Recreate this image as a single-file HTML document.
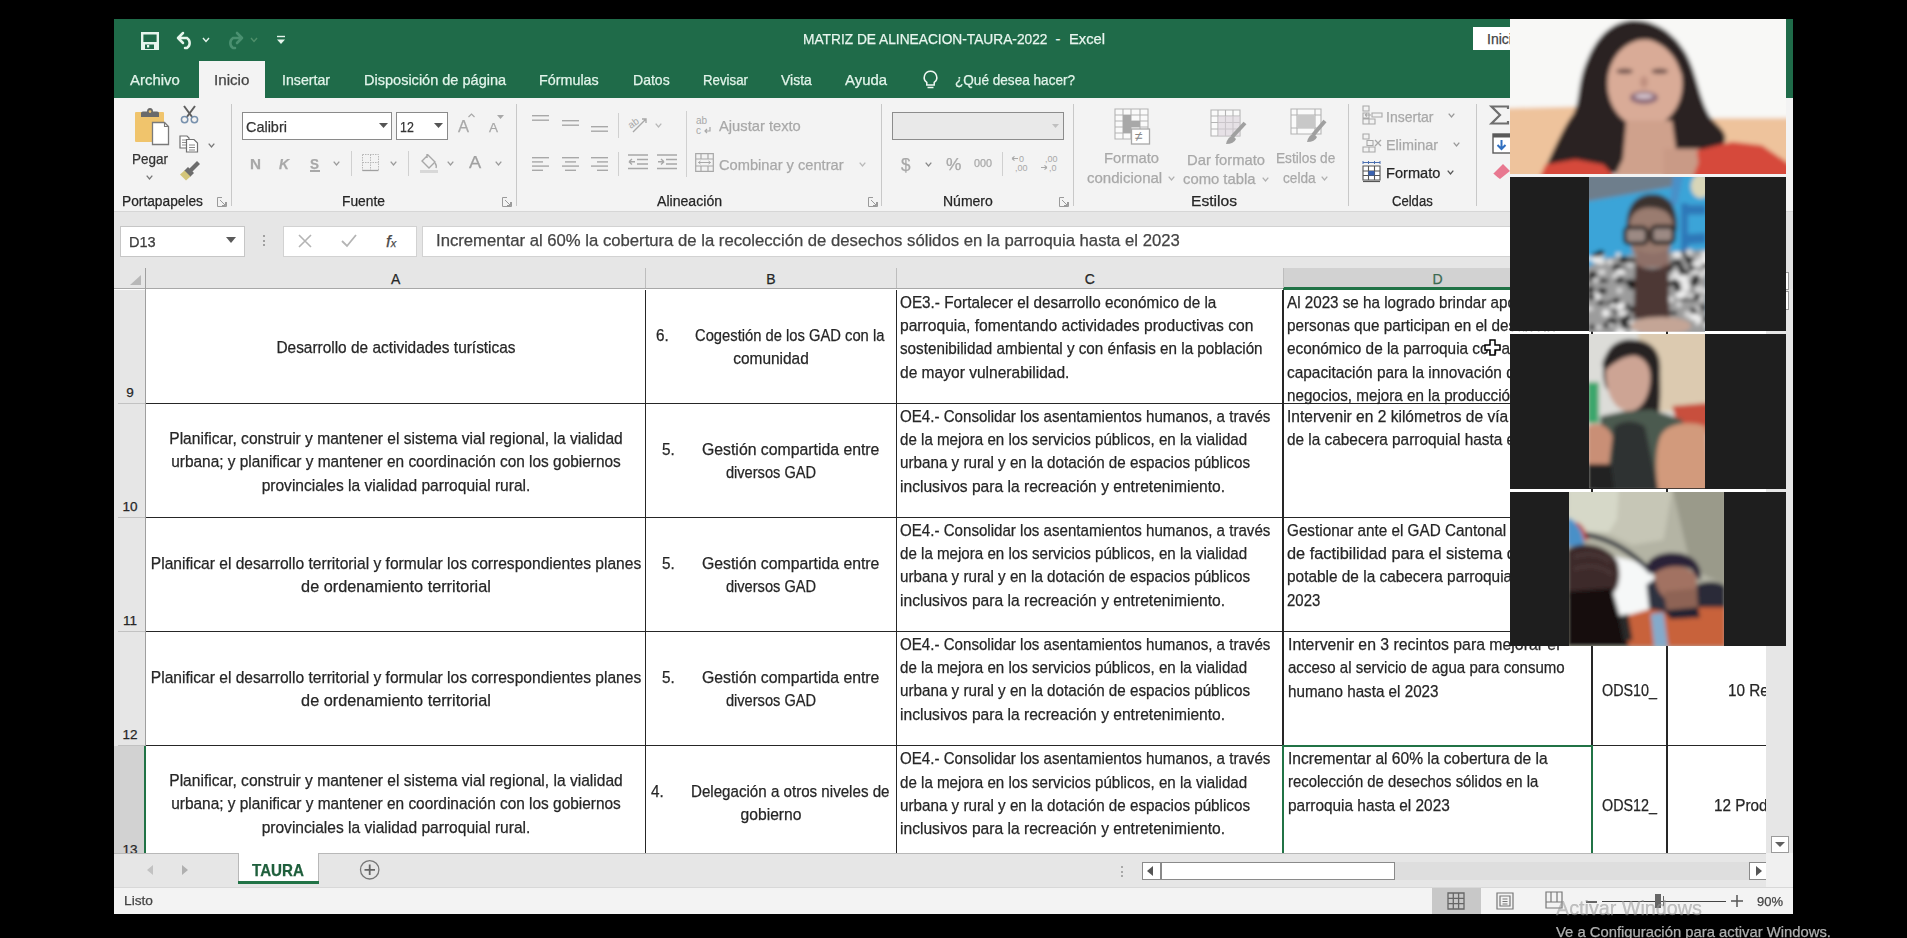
<!DOCTYPE html><html><head><meta charset="utf-8"><style>
html,body{margin:0;padding:0;}
body{width:1907px;height:938px;background:#000;position:relative;overflow:hidden;font-family:"Liberation Sans",sans-serif;}
.t{position:absolute;white-space:nowrap;-webkit-text-stroke:0.25px currentColor;}
.b{position:absolute;box-sizing:border-box;}
svg{position:absolute;overflow:visible;}
</style></head><body>
<div class="b" style="left:114.00px;top:19.00px;width:1679.00px;height:79.00px;background:#1f6b49;"></div>
<div class="b" style="left:114.00px;top:98.00px;width:1679.00px;height:114.00px;background:#f3f3f3;border-bottom:1px solid #d6d6d6;"></div>
<div class="b" style="left:199.00px;top:61.00px;width:66.00px;height:37.00px;background:#f3f3f3;"></div>
<div class="b" style="left:114.00px;top:212.00px;width:1679.00px;height:77.00px;background:#e6e6e6;"></div>
<div class="b" style="left:114.00px;top:289.00px;width:1679.00px;height:564.00px;background:#ffffff;"></div>
<div class="b" style="left:114.00px;top:853.00px;width:1679.00px;height:34.00px;background:#e6e6e6;border-top:1px solid #c8c8c8;border-bottom:1px solid #d4d4d4;"></div>
<div class="b" style="left:114.00px;top:887.00px;width:1679.00px;height:27.00px;background:#f3f3f3;"></div>
<svg style="left:141px;top:32px" width="18" height="18"><path d="M1.2 1.2 H16.8 V16.8 H1.2 Z" fill="none" stroke="#e6f5ec" stroke-width="2.4"/><rect x="1" y="10" width="16" height="7" fill="#e6f5ec"/><rect x="4" y="12.5" width="9" height="4.5" fill="#1f6b49"/><rect x="6" y="13" width="2.2" height="2.5" fill="#e6f5ec"/></svg>
<svg style="left:176px;top:31px" width="20" height="18"><path d="M2 7 L7 2 M2 7 L7 12 M2 7 H11 A6 6 0 0 1 11 17 H9" fill="none" stroke="#e6f5ec" stroke-width="2.5" stroke-linecap="round"/></svg>
<svg style="left:202px;top:37px" width="8" height="6"><path d="M1 1 L4 4.5 L7 1" fill="none" stroke="#e6f5ec" stroke-width="1.4"/></svg>
<svg style="left:224px;top:31px" width="20" height="18"><path d="M18 7 L13 2 M18 7 L13 12 M18 7 H9 A6 6 0 0 0 9 17 H11" fill="none" stroke="#4a9070" stroke-width="2.6" stroke-linecap="round"/></svg>
<svg style="left:250px;top:37px" width="8" height="6"><path d="M1 1 L4 4.5 L7 1" fill="none" stroke="#4f8f6a" stroke-width="1.4"/></svg>
<svg style="left:276px;top:35px" width="10" height="10"><path d="M1 1.5 H9" stroke="#e6f5ec" stroke-width="1.4"/><path d="M1 4.5 L9 4.5 L5 9Z" fill="#e6f5ec"/></svg>
<div class="t" style="top:31.53px;font-size:14.50px;line-height:14.50px;color:#e8f5ee;left:803.10px;transform:scaleX(0.9473);transform-origin:0 0;">MATRIZ DE ALINEACION-TAURA-2022</div>
<div class="t" style="top:31.53px;font-size:14.50px;line-height:14.50px;color:#e8f5ee;left:1055.50px;">-</div>
<div class="t" style="top:31.53px;font-size:14.50px;line-height:14.50px;color:#e8f5ee;left:1069.40px;transform:scaleX(1.0153);transform-origin:0 0;">Excel</div>
<div class="b" style="left:1473.00px;top:27.00px;width:57.00px;height:23.00px;background:#fff;"></div>
<div class="t" style="top:31.65px;font-size:14.00px;line-height:14.00px;color:#444;left:1487.00px;">Inicio</div>
<div class="t" style="top:73.13px;font-size:14.50px;line-height:14.50px;color:#e2f4ea;left:130.30px;transform:scaleX(1.0300);transform-origin:0 0;">Archivo</div>
<div class="t" style="top:73.13px;font-size:14.50px;line-height:14.50px;color:#e2f4ea;left:282.30px;transform:scaleX(0.9764);transform-origin:0 0;">Insertar</div>
<div class="t" style="top:73.13px;font-size:14.50px;line-height:14.50px;color:#e2f4ea;left:363.90px;transform:scaleX(1.0016);transform-origin:0 0;">Disposición de página</div>
<div class="t" style="top:73.13px;font-size:14.50px;line-height:14.50px;color:#e2f4ea;left:539.30px;transform:scaleX(0.9879);transform-origin:0 0;">Fórmulas</div>
<div class="t" style="top:73.13px;font-size:14.50px;line-height:14.50px;color:#e2f4ea;left:632.80px;transform:scaleX(0.9689);transform-origin:0 0;">Datos</div>
<div class="t" style="top:73.13px;font-size:14.50px;line-height:14.50px;color:#e2f4ea;left:703.00px;transform:scaleX(0.9155);transform-origin:0 0;">Revisar</div>
<div class="t" style="top:73.13px;font-size:14.50px;line-height:14.50px;color:#e2f4ea;left:781.00px;transform:scaleX(0.9633);transform-origin:0 0;">Vista</div>
<div class="t" style="top:73.13px;font-size:14.50px;line-height:14.50px;color:#e2f4ea;left:845.00px;transform:scaleX(1.0281);transform-origin:0 0;">Ayuda</div>
<div class="t" style="top:73.13px;font-size:14.50px;line-height:14.50px;color:#e2f4ea;left:954.50px;transform:scaleX(0.9371);transform-origin:0 0;">¿Qué desea hacer?</div>
<div class="t" style="top:73.13px;font-size:14.50px;line-height:14.50px;color:#444;left:213.60px;transform:scaleX(1.0458);transform-origin:0 0;">Inicio</div>
<svg style="left:922px;top:70px" width="17" height="20"><path d="M8.5 1.2 A6.2 6.2 0 0 1 12.2 12.4 V15 H4.8 V12.4 A6.2 6.2 0 0 1 8.5 1.2Z" fill="none" stroke="#f0f7f2" stroke-width="1.5"/><path d="M5.5 17.5 H11.5" stroke="#f0f7f2" stroke-width="1.5"/></svg>
<div class="t" style="top:194.35px;font-size:14.00px;line-height:14.00px;color:#262626;left:122.00px;transform:scaleX(0.9817);transform-origin:0 0;">Portapapeles</div>
<div class="t" style="top:194.35px;font-size:14.00px;line-height:14.00px;color:#262626;left:341.80px;transform:scaleX(0.9865);transform-origin:0 0;">Fuente</div>
<div class="t" style="top:194.35px;font-size:14.00px;line-height:14.00px;color:#262626;left:656.50px;transform:scaleX(1.0077);transform-origin:0 0;">Alineación</div>
<div class="t" style="top:194.35px;font-size:14.00px;line-height:14.00px;color:#262626;left:942.60px;transform:scaleX(1.0001);transform-origin:0 0;">Número</div>
<div class="t" style="top:194.35px;font-size:14.00px;line-height:14.00px;color:#262626;left:1191.20px;transform:scaleX(1.1155);transform-origin:0 0;">Estilos</div>
<div class="t" style="top:194.35px;font-size:14.00px;line-height:14.00px;color:#262626;left:1391.50px;transform:scaleX(0.9339);transform-origin:0 0;">Celdas</div>
<svg style="left:217.0px;top:197.0px" width="10" height="10"><path d="M0.5 0.5 H5 M0.5 0.5 V9.5 H9.5 V5 M3 3 L8.5 8.5 M5 8.5 H8.5 V5" fill="none" stroke="#9a9a9a" stroke-width="1"/></svg>
<svg style="left:502.0px;top:197.0px" width="10" height="10"><path d="M0.5 0.5 H5 M0.5 0.5 V9.5 H9.5 V5 M3 3 L8.5 8.5 M5 8.5 H8.5 V5" fill="none" stroke="#9a9a9a" stroke-width="1"/></svg>
<svg style="left:867.5px;top:197.0px" width="10" height="10"><path d="M0.5 0.5 H5 M0.5 0.5 V9.5 H9.5 V5 M3 3 L8.5 8.5 M5 8.5 H8.5 V5" fill="none" stroke="#9a9a9a" stroke-width="1"/></svg>
<svg style="left:1059.0px;top:197.0px" width="10" height="10"><path d="M0.5 0.5 H5 M0.5 0.5 V9.5 H9.5 V5 M3 3 L8.5 8.5 M5 8.5 H8.5 V5" fill="none" stroke="#9a9a9a" stroke-width="1"/></svg>
<div class="b" style="left:231.00px;top:103.50px;width:1.00px;height:102.50px;background:#c8c8c8;"></div>
<div class="b" style="left:516.00px;top:103.50px;width:1.00px;height:102.50px;background:#c8c8c8;"></div>
<div class="b" style="left:881.00px;top:103.50px;width:1.00px;height:102.50px;background:#c8c8c8;"></div>
<div class="b" style="left:1072.50px;top:103.50px;width:1.00px;height:102.50px;background:#c8c8c8;"></div>
<div class="b" style="left:1348.10px;top:103.50px;width:1.00px;height:102.50px;background:#c8c8c8;"></div>
<div class="b" style="left:1475.50px;top:103.50px;width:1.00px;height:102.50px;background:#c8c8c8;"></div>
<svg style="left:134px;top:107px" width="36" height="40"><rect x="1" y="5" width="29" height="30" rx="1" fill="#f0c46c"/><path d="M7 10 V6 Q7 4.5 9 4.5 H13 Q13 1 16 1 Q19 1 19 4.5 H23 Q25 4.5 25 6 V10Z" fill="#6a6a6a"/><circle cx="16" cy="4.6" r="1.3" fill="#f0c46c"/><path d="M18.5 15.5 H30.5 L34.5 19.5 V37.5 H18.5Z" fill="#fff" stroke="#7a7a7a" stroke-width="1.3"/><path d="M30.5 15.5 V19.5 H34.5" fill="none" stroke="#7a7a7a" stroke-width="1.1"/></svg>
<div class="t" style="top:150.60px;font-size:15.00px;line-height:15.00px;color:#333;left:132.00px;transform:scaleX(0.8994);transform-origin:0 0;">Pegar</div>
<svg style="left:146.4px;top:175.0px" width="7" height="5"><path d="M0.7 0.7 L3.5 4 L6.3 0.7" fill="none" stroke="#777" stroke-width="1.3"/></svg>
<svg style="left:180px;top:105px" width="19" height="19"><path d="M4 1 L12.5 12.5 M15 1 L6.5 12.5" stroke="#5e5e5e" stroke-width="2"/><circle cx="4.6" cy="14.6" r="3.2" fill="none" stroke="#7891ad" stroke-width="1.5"/><circle cx="14.4" cy="14.6" r="3.2" fill="none" stroke="#7891ad" stroke-width="1.5"/></svg>
<svg style="left:179px;top:135px" width="20" height="18"><path d="M1 1 H8 L10 3 V13 H1Z" fill="#fff" stroke="#707070" stroke-width="1.2"/><path d="M3 5 H7 M3 7.5 H7 M3 10 H7" stroke="#888" stroke-width="0.9"/><path d="M7.5 4.5 H15 L18.5 8 V17 H7.5Z" fill="#fff" stroke="#707070" stroke-width="1.2"/><path d="M10 10 H16 M10 12.5 H16 M10 15 H16" stroke="#888" stroke-width="1"/></svg>
<svg style="left:208.0px;top:143.0px" width="7" height="5"><path d="M0.7 0.7 L3.5 4 L6.3 0.7" fill="none" stroke="#777" stroke-width="1.3"/></svg>
<svg style="left:179px;top:162px" width="21" height="19"><path d="M13 7 L18 2" stroke="#6d6d6d" stroke-width="4.2" stroke-linecap="square"/><path d="M9 5 L15 11 L11 15 L5 9Z" fill="#6d6d6d"/><path d="M5.5 8.5 L11.5 14.5 L7 18.5 L1 12.5Z" fill="#d4c67a"/></svg>
<div class="b" style="left:242.00px;top:112.00px;width:150.00px;height:28.00px;background:#fff;border:1px solid #8a8a8a;"></div>
<div class="t" style="top:118.50px;font-size:15.00px;line-height:15.00px;color:#333;left:246.00px;transform:scaleX(0.9621);transform-origin:0 0;">Calibri</div>
<svg style="left:379px;top:123px" width="9" height="5"><path d="M0 0 H9 L4.5 5Z" fill="#555"/></svg>
<div class="b" style="left:395.50px;top:112.00px;width:52.10px;height:28.00px;background:#fff;border:1px solid #8a8a8a;"></div>
<div class="t" style="top:118.50px;font-size:15.00px;line-height:15.00px;color:#333;left:400.00px;transform:scaleX(0.8271);transform-origin:0 0;">12</div>
<svg style="left:434px;top:123px" width="9" height="5"><path d="M0 0 H9 L4.5 5Z" fill="#555"/></svg>
<div class="t" style="top:117.91px;font-size:17.00px;line-height:17.00px;color:#a8a8a8;left:457.80px;transform:scaleX(0.9701);transform-origin:0 0;">A</div>
<svg style="left:468px;top:113px" width="7" height="5"><path d="M0.5 4 L3.5 1 L6.5 4" fill="none" stroke="#a8a8a8" stroke-width="1.2"/></svg>
<div class="t" style="top:121.30px;font-size:13.00px;line-height:13.00px;color:#a8a8a8;left:488.70px;transform:scaleX(1.0379);transform-origin:0 0;">A</div>
<svg style="left:497px;top:115px" width="7" height="5"><path d="M0 0 H7 L3.5 4Z" fill="#a8a8a8"/></svg>
<div class="t" style="top:155.80px;font-size:15.00px;line-height:15.00px;color:#a8a8a8;font-weight:bold;left:249.80px;transform:scaleX(1.0154);transform-origin:0 0;">N</div>
<div class="t" style="top:155.80px;font-size:15.00px;line-height:15.00px;color:#a8a8a8;font-weight:bold;left:279.00px;transform:scaleX(0.9231);transform-origin:0 0;"><i>K</i></div>
<div class="t" style="top:155.80px;font-size:15.00px;line-height:15.00px;color:#a8a8a8;font-weight:bold;left:309.90px;transform:scaleX(0.8995);transform-origin:0 0;">S</div>
<div class="b" style="left:309.50px;top:170.00px;width:10.00px;height:1.50px;background:#a8a8a8;"></div>
<svg style="left:333.0px;top:161.0px" width="7" height="5"><path d="M0.7 0.7 L3.5 4 L6.3 0.7" fill="none" stroke="#9a9a9a" stroke-width="1.3"/></svg>
<div class="b" style="left:351.30px;top:151.40px;width:1.00px;height:24.60px;background:#d0d0d0;"></div>
<svg style="left:362px;top:154px" width="17" height="17"><path d="M0.5 0.5 H16.5 V16.5 H0.5Z M8.5 0.5 V16.5 M0.5 8.5 H16.5" fill="none" stroke="#b8b8b8" stroke-width="1" stroke-dasharray="1.5 1"/><path d="M0.5 16.5 H16.5" stroke="#a0a0a0" stroke-width="1.3"/></svg>
<svg style="left:389.5px;top:161.0px" width="7" height="5"><path d="M0.7 0.7 L3.5 4 L6.3 0.7" fill="none" stroke="#9a9a9a" stroke-width="1.3"/></svg>
<div class="b" style="left:407.90px;top:151.40px;width:1.00px;height:24.60px;background:#d0d0d0;"></div>
<svg style="left:419px;top:153px" width="20" height="20"><path d="M8 1 V5 M3 8 L9 2 L16 9 L10 15Z" fill="none" stroke="#a8a8a8" stroke-width="1.4"/><path d="M16 10 Q18 13 17 15" stroke="#a8a8a8" stroke-width="1.4" fill="none"/><rect x="1" y="17" width="18" height="3" fill="#d8d8d8"/></svg>
<svg style="left:446.5px;top:161.0px" width="7" height="5"><path d="M0.7 0.7 L3.5 4 L6.3 0.7" fill="none" stroke="#9a9a9a" stroke-width="1.3"/></svg>
<div class="t" style="top:155.46px;font-size:16.00px;line-height:16.00px;color:#a0a0a0;left:469.10px;transform:scaleX(1.1431);transform-origin:0 0;">A</div>
<svg style="left:494.5px;top:161.0px" width="7" height="5"><path d="M0.7 0.7 L3.5 4 L6.3 0.7" fill="none" stroke="#9a9a9a" stroke-width="1.3"/></svg>
<svg style="left:532.0px;top:115.0px" width="20" height="20"><rect x="0.0" y="0.0" width="17.0" height="1.4" fill="#a8a8a8"/><rect x="0.0" y="4.5" width="17.0" height="1.4" fill="#a8a8a8"/></svg>
<svg style="left:561.5px;top:120.0px" width="20" height="20"><rect x="0.0" y="0.0" width="17.0" height="1.4" fill="#a8a8a8"/><rect x="0.0" y="4.5" width="17.0" height="1.4" fill="#a8a8a8"/></svg>
<svg style="left:591.0px;top:126.0px" width="20" height="20"><rect x="0.0" y="0.0" width="17.0" height="1.4" fill="#a8a8a8"/><rect x="0.0" y="4.5" width="17.0" height="1.4" fill="#a8a8a8"/></svg>
<div class="b" style="left:618.10px;top:113.00px;width:1.00px;height:25.00px;background:#d0d0d0;"></div>
<svg style="left:628px;top:115px" width="21" height="19"><text x="0" y="11" font-size="10" font-family="Liberation Sans" fill="#a8a8a8" transform="rotate(-35 6 8)">ab</text><path d="M5 17 L18 4 M14 4 H18 V8" fill="none" stroke="#a8a8a8" stroke-width="1.4"/></svg>
<svg style="left:654.5px;top:123.0px" width="7" height="5"><path d="M0.7 0.7 L3.5 4 L6.3 0.7" fill="none" stroke="#b8b8b8" stroke-width="1.3"/></svg>
<div class="b" style="left:685.50px;top:111.00px;width:1.00px;height:66.00px;background:#d0d0d0;"></div>
<svg style="left:696px;top:115px" width="18" height="20"><text x="0" y="9" font-size="10" font-family="Liberation Sans" fill="#a8a8a8">ab</text><text x="0" y="19" font-size="10" font-family="Liberation Sans" fill="#a8a8a8">c</text><path d="M14 12 V16 H9 M11 14 L9 16 L11 18" fill="none" stroke="#a8a8a8" stroke-width="1.2"/></svg>
<div class="t" style="top:118.20px;font-size:15.00px;line-height:15.00px;color:#a8a8a8;left:719.20px;transform:scaleX(0.9811);transform-origin:0 0;">Ajustar texto</div>
<svg style="left:532.0px;top:157.0px" width="20" height="20"><rect x="0.0" y="0.0" width="17.0" height="1.4" fill="#a8a8a8"/><rect x="0.0" y="4.2" width="11.0" height="1.4" fill="#a8a8a8"/><rect x="0.0" y="8.4" width="17.0" height="1.4" fill="#a8a8a8"/><rect x="0.0" y="12.6" width="11.0" height="1.4" fill="#a8a8a8"/></svg>
<svg style="left:561.5px;top:157.0px" width="20" height="20"><rect x="0.0" y="0.0" width="17.0" height="1.4" fill="#a8a8a8"/><rect x="3.0" y="4.2" width="11.0" height="1.4" fill="#a8a8a8"/><rect x="0.0" y="8.4" width="17.0" height="1.4" fill="#a8a8a8"/><rect x="3.0" y="12.6" width="11.0" height="1.4" fill="#a8a8a8"/></svg>
<svg style="left:591.0px;top:157.0px" width="20" height="20"><rect x="0.0" y="0.0" width="17.0" height="1.4" fill="#a8a8a8"/><rect x="6.0" y="4.2" width="11.0" height="1.4" fill="#a8a8a8"/><rect x="0.0" y="8.4" width="17.0" height="1.4" fill="#a8a8a8"/><rect x="6.0" y="12.6" width="11.0" height="1.4" fill="#a8a8a8"/></svg>
<div class="b" style="left:618.10px;top:152.00px;width:1.00px;height:24.00px;background:#d0d0d0;"></div>
<svg style="left:627.5px;top:154px" width="21" height="18"><path d="M0 1 H20 M9 5.5 H20 M9 10 H20 M0 14.5 H20" stroke="#a8a8a8" stroke-width="1.4"/><path d="M1 7.7 H7 M1 7.7 L4 5 M1 7.7 L4 10.4" stroke="#a8a8a8" stroke-width="1.4" fill="none"/></svg>
<svg style="left:657px;top:154px" width="21" height="18"><path d="M0 1 H20 M9 5.5 H20 M9 10 H20 M0 14.5 H20" stroke="#a8a8a8" stroke-width="1.4"/><path d="M1 7.7 H7 M7 7.7 L4 5 M7 7.7 L4 10.4" stroke="#a8a8a8" stroke-width="1.4" fill="none"/></svg>
<svg style="left:695px;top:153px" width="19" height="19"><path d="M0.7 0.7 H18.3 V18.3 H0.7Z M0.7 6 H18.3 M0.7 13 H18.3 M6 0.7 V6 M13 0.7 V6 M6 13 V18.3 M13 13 V18.3" fill="none" stroke="#a8a8a8" stroke-width="1.2"/><path d="M3.5 9.5 H15.5 M3.5 9.5 L5.5 8 M3.5 9.5 L5.5 11 M15.5 9.5 L13.5 8 M15.5 9.5 L13.5 11" stroke="#a8a8a8" stroke-width="1" fill="none"/></svg>
<div class="t" style="top:157.00px;font-size:15.00px;line-height:15.00px;color:#a8a8a8;left:719.20px;transform:scaleX(0.9769);transform-origin:0 0;">Combinar y centrar</div>
<svg style="left:858.5px;top:162.0px" width="7" height="5"><path d="M0.7 0.7 L3.5 4 L6.3 0.7" fill="none" stroke="#b8b8b8" stroke-width="1.3"/></svg>
<div class="b" style="left:892.00px;top:112.00px;width:172.00px;height:28.00px;background:#e9e9e9;border:1px solid #8c8c8c;"></div>
<svg style="left:1052px;top:124px" width="7" height="4"><path d="M0 0 H7 L3.5 4Z" fill="#c0c0c0"/></svg>
<div class="t" style="top:156.26px;font-size:18.00px;line-height:18.00px;color:#a8a8a8;left:901.40px;transform:scaleX(0.9489);transform-origin:0 0;">$</div>
<svg style="left:924.5px;top:162.0px" width="7" height="5"><path d="M0.7 0.7 L3.5 4 L6.3 0.7" fill="none" stroke="#888" stroke-width="1.3"/></svg>
<div class="t" style="top:156.96px;font-size:16.00px;line-height:16.00px;color:#a8a8a8;left:946.40px;transform:scaleX(1.0825);transform-origin:0 0;">%</div>
<div class="t" style="top:157.97px;font-size:11.50px;line-height:11.50px;color:#a8a8a8;left:974.10px;transform:scaleX(0.9381);transform-origin:0 0;">000</div>
<div class="b" style="left:1001.90px;top:151.60px;width:1.00px;height:24.40px;background:#d0d0d0;"></div>
<svg style="left:1011px;top:154px" width="19" height="19"><text x="8" y="8" font-size="9" font-family="Liberation Sans" fill="#a8a8a8">0</text><text x="4" y="17" font-size="9" font-family="Liberation Sans" fill="#a8a8a8">,00</text><path d="M1 4.5 H7 M1 4.5 L3.5 2.3 M1 4.5 L3.5 6.7" stroke="#a8a8a8" stroke-width="1.1" fill="none"/></svg>
<svg style="left:1040px;top:154px" width="20" height="19"><text x="5" y="8" font-size="9" font-family="Liberation Sans" fill="#a8a8a8">,00</text><text x="9" y="17" font-size="9" font-family="Liberation Sans" fill="#a8a8a8">,0</text><path d="M1 13.5 H7 M7 13.5 L4.5 11.3 M7 13.5 L4.5 15.7" stroke="#a8a8a8" stroke-width="1.1" fill="none"/></svg>
<svg style="left:1114.0px;top:108.0px" width="39" height="39"><path d="M1 1 H34 V31 H1Z M1 7 H34 M1 13 H34 M1 19 H34 M1 25 H34 M9 1 V31 M17 1 V31 M26 1 V31" fill="#fafafa" stroke="#b4b4b4" stroke-width="1.1"/><rect x="9" y="7" width="8" height="18" fill="#a8a8a8"/><rect x="17" y="13" width="9" height="6" fill="#a8a8a8"/><rect x="17.5" y="21" width="18" height="15" fill="#fff" stroke="#a8a8a8" stroke-width="1.3"/><text x="21" y="33" font-size="14" font-family="Liberation Sans" fill="#888">&#8800;</text></svg>
<div class="t" style="top:150.30px;font-size:15.00px;line-height:15.00px;color:#a8a8a8;left:1103.80px;transform:scaleX(0.9848);transform-origin:0 0;">Formato</div>
<div class="t" style="top:170.10px;font-size:15.00px;line-height:15.00px;color:#a8a8a8;left:1086.80px;transform:scaleX(1.0019);transform-origin:0 0;">condicional</div>
<svg style="left:1168.0px;top:176.0px" width="7" height="5"><path d="M0.7 0.7 L3.5 4 L6.3 0.7" fill="none" stroke="#b0b0b0" stroke-width="1.3"/></svg>
<svg style="left:1210.0px;top:109.0px" width="38" height="38"><path d="M1 1 H30 V27 H1Z M1 7 H30 M1 13.5 H30 M1 20 H30 M8 1 V27 M15.5 1 V27 M23 1 V27" fill="#fafafa" stroke="#b4b4b4" stroke-width="1.1"/><rect x="8" y="7" width="22" height="20" fill="#d8d0d8" opacity="0.6"/><path d="M35 14 L22 28" stroke="#a0a0a0" stroke-width="4"/><path d="M23 27 Q18 27 16 35 Q24 35 26 30Z" fill="#a0a0a0"/></svg>
<div class="t" style="top:151.70px;font-size:15.00px;line-height:15.00px;color:#a8a8a8;left:1187.20px;transform:scaleX(0.9850);transform-origin:0 0;">Dar formato</div>
<div class="t" style="top:171.20px;font-size:15.00px;line-height:15.00px;color:#a8a8a8;left:1182.90px;transform:scaleX(0.9881);transform-origin:0 0;">como tabla</div>
<svg style="left:1261.5px;top:177.0px" width="7" height="5"><path d="M0.7 0.7 L3.5 4 L6.3 0.7" fill="none" stroke="#b0b0b0" stroke-width="1.3"/></svg>
<svg style="left:1290.0px;top:108.0px" width="38" height="37"><path d="M1 1 H31 V26 H1Z M1 7 H31 M1 20 H31 M7 1 V26 M25 1 V26" fill="#fafafa" stroke="#b4b4b4" stroke-width="1.1"/><rect x="7" y="7" width="18" height="13" fill="#c8c8c8"/><path d="M35 13 L23 27" stroke="#a0a0a0" stroke-width="4"/><path d="M24 26 Q19 26 17 34 Q25 34 27 29Z" fill="#a0a0a0"/></svg>
<div class="t" style="top:150.00px;font-size:15.00px;line-height:15.00px;color:#a8a8a8;left:1276.40px;transform:scaleX(0.9118);transform-origin:0 0;">Estilos de</div>
<div class="t" style="top:169.70px;font-size:15.00px;line-height:15.00px;color:#a8a8a8;left:1282.50px;transform:scaleX(0.9119);transform-origin:0 0;">celda</div>
<svg style="left:1321.0px;top:176.0px" width="7" height="5"><path d="M0.7 0.7 L3.5 4 L6.3 0.7" fill="none" stroke="#b0b0b0" stroke-width="1.3"/></svg>
<svg style="left:1362px;top:105px" width="22" height="21"><path d="M1 1 H7 V6 H1Z M1 8 H7 V13 H1Z M1 14 H7 V19 H1Z M7 14 H13 V19 H7Z" fill="none" stroke="#a8a8a8" stroke-width="1.1"/><path d="M10 8 H20 V12 H10Z" fill="none" stroke="#a8a8a8" stroke-width="1.1"/><path d="M3 10 H9 M3 10 L5 8.3 M3 10 L5 11.7" stroke="#a8a8a8" stroke-width="1.1" fill="none"/></svg>
<div class="t" style="top:108.90px;font-size:15.00px;line-height:15.00px;color:#a8a8a8;left:1386.30px;transform:scaleX(0.9341);transform-origin:0 0;">Insertar</div>
<svg style="left:1448.0px;top:113.0px" width="7" height="5"><path d="M0.7 0.7 L3.5 4 L6.3 0.7" fill="none" stroke="#999" stroke-width="1.3"/></svg>
<svg style="left:1362px;top:133px" width="22" height="21"><path d="M1 1 H7 V6 H1Z M1 14 H7 V19 H1Z M7 14 H13 V19 H7Z M5 7.5 H11 V12.5 H5Z" fill="none" stroke="#a8a8a8" stroke-width="1.1"/><path d="M13 7 L19 13 M19 7 L13 13" stroke="#a8a8a8" stroke-width="1.3"/></svg>
<div class="t" style="top:137.00px;font-size:15.00px;line-height:15.00px;color:#a8a8a8;left:1386.30px;transform:scaleX(0.9598);transform-origin:0 0;">Eliminar</div>
<svg style="left:1453.0px;top:141.5px" width="7" height="5"><path d="M0.7 0.7 L3.5 4 L6.3 0.7" fill="none" stroke="#999" stroke-width="1.3"/></svg>
<svg style="left:1362px;top:161px" width="20" height="22"><path d="M1 1.5 H18 M1 0 V3 M18 0 V3 M6.5 0 V3 M12.5 0 V3" stroke="#4a6fb0" stroke-width="1"/><path d="M1 5 H18 V19 H1Z M1 10 H18 M1 14.5 H18 M6.5 5 V19 M12.5 5 V19" fill="#fff" stroke="#555" stroke-width="1.1"/><rect x="6.5" y="10" width="6" height="4.5" fill="#3a62b0"/><path d="M1 20.5 H18" stroke="#555" stroke-width="1.2"/></svg>
<div class="t" style="top:165.20px;font-size:15.00px;line-height:15.00px;color:#262626;left:1386.30px;transform:scaleX(0.9723);transform-origin:0 0;">Formato</div>
<svg style="left:1446.5px;top:170.0px" width="7" height="5"><path d="M0.7 0.7 L3.5 4 L6.3 0.7" fill="none" stroke="#555" stroke-width="1.3"/></svg>
<svg style="left:1490px;top:105px" width="21" height="20"><path d="M18 4 V1.5 H1.5 L10 10 L1.5 18.5 H18 V16" fill="none" stroke="#6e6e6e" stroke-width="2.2"/></svg>
<svg style="left:1491.5px;top:133px" width="19" height="21"><rect x="1" y="1" width="18" height="19" fill="#fff" stroke="#5a5a5a" stroke-width="1.4"/><rect x="1" y="1" width="18" height="3.5" fill="#5a5a5a"/><path d="M9.5 7 V16 M5.5 12 L9.5 16 L13.5 12" fill="none" stroke="#2f6fc0" stroke-width="2"/></svg>
<svg style="left:1491.5px;top:162px" width="19" height="18"><path d="M1 12 L11 2 L18 9 L8 17Z" fill="#e87890"/><path d="M1 12 L5 16" stroke="#f3f3f3" stroke-width="1.2"/></svg>
<div class="b" style="left:120.00px;top:225.50px;width:125.00px;height:31.00px;background:#fff;border:1px solid #c6c6c6;"></div>
<div class="t" style="top:234.10px;font-size:15.00px;line-height:15.00px;color:#3b3b3b;left:129.00px;transform:scaleX(0.9703);transform-origin:0 0;">D13</div>
<svg style="left:226px;top:237px" width="10" height="6"><path d="M0 0 L10 0 L5 6Z" fill="#5a5a5a"/></svg>
<div class="b" style="left:262.50px;top:235.00px;width:2.00px;height:2.00px;background:#a0a0a0;"></div>
<div class="b" style="left:262.50px;top:239.50px;width:2.00px;height:2.00px;background:#a0a0a0;"></div>
<div class="b" style="left:262.50px;top:244.00px;width:2.00px;height:2.00px;background:#a0a0a0;"></div>
<div class="b" style="left:283.00px;top:225.50px;width:134.00px;height:31.00px;background:#fff;border:1px solid #d2d2d2;"></div>
<svg style="left:298px;top:234px" width="14" height="14"><path d="M1 1 L13 13 M13 1 L1 13" stroke="#b4b4b4" stroke-width="1.6"/></svg>
<svg style="left:341px;top:234px" width="16" height="14"><path d="M1 7 L6 12 L15 1" stroke="#b4b4b4" stroke-width="1.8" fill="none"/></svg>
<div class="t" style="top:232.61px;font-size:17.00px;line-height:17.00px;color:#4a4a4a;left:386.00px;font-family:"Liberation Serif",serif;"><i>f</i><span style="font-size:11px"><i>x</i></span></div>
<div class="b" style="left:421.50px;top:225.50px;width:1364.50px;height:31.00px;background:#fff;border:1px solid #d2d2d2;border-right:none;"></div>
<div class="t" style="top:232.66px;font-size:16.70px;line-height:16.70px;color:#444;left:436.40px;transform:scaleX(0.9997);transform-origin:0 0;">Incrementar al 60% la cobertura de la recolección de desechos sólidos en la parroquia hasta el 2023</div>
<div class="b" style="left:146.00px;top:268.00px;width:1620.00px;height:21.00px;background:#e6e6e6;"></div>
<div class="b" style="left:1283.00px;top:268.00px;width:309.00px;height:21.00px;background:#d2d2d2;"></div>
<div class="b" style="left:114.00px;top:288.20px;width:1652.00px;height:1.10px;background:#a8a8a8;"></div>
<div class="b" style="left:1283.00px;top:287.00px;width:309.00px;height:2.50px;background:#217346;"></div>
<div class="t" style="top:271.65px;font-size:14.00px;line-height:14.00px;color:#262626;left:-4.25px;width:800.00px;text-align:center;">A</div>
<div class="t" style="top:271.65px;font-size:14.00px;line-height:14.00px;color:#262626;left:371.00px;width:800.00px;text-align:center;">B</div>
<div class="t" style="top:271.65px;font-size:14.00px;line-height:14.00px;color:#262626;left:689.75px;width:800.00px;text-align:center;">C</div>
<div class="t" style="top:271.65px;font-size:14.00px;line-height:14.00px;color:#3c6a50;left:1037.50px;width:800.00px;text-align:center;">D</div>
<div class="t" style="top:271.65px;font-size:14.00px;line-height:14.00px;color:#262626;left:1229.50px;width:800.00px;text-align:center;">E</div>
<div class="t" style="top:271.65px;font-size:14.00px;line-height:14.00px;color:#262626;left:1316.50px;width:800.00px;text-align:center;">F</div>
<div class="b" style="left:645.00px;top:268.00px;width:1.00px;height:20.00px;background:#bdbdbd;"></div>
<div class="b" style="left:896.00px;top:268.00px;width:1.00px;height:20.00px;background:#bdbdbd;"></div>
<div class="b" style="left:1282.50px;top:268.00px;width:1.00px;height:20.00px;background:#bdbdbd;"></div>
<div class="b" style="left:1591.50px;top:268.00px;width:1.00px;height:20.00px;background:#bdbdbd;"></div>
<div class="b" style="left:1666.50px;top:268.00px;width:1.00px;height:20.00px;background:#bdbdbd;"></div>
<div class="b" style="left:145.00px;top:268.00px;width:1.00px;height:585.00px;background:#9f9f9f;"></div>
<svg style="left:129px;top:274px" width="14" height="12"><path d="M12 1 L12 11 L1 11Z" fill="#b8b8b8"/></svg>
<div class="b" style="left:114.00px;top:289.50px;width:31.00px;height:563.50px;background:#e6e6e6;"></div>
<div class="b" style="left:114.00px;top:745.50px;width:31.00px;height:107.50px;background:#d2d2d2;"></div>
<div class="b" style="left:143.50px;top:745.50px;width:2.50px;height:107.50px;background:#217346;"></div>
<div class="b" style="left:118.00px;top:403.00px;width:27.00px;height:1.00px;background:#c2c2c2;"></div>
<div class="b" style="left:118.00px;top:517.00px;width:27.00px;height:1.00px;background:#c2c2c2;"></div>
<div class="b" style="left:118.00px;top:631.00px;width:27.00px;height:1.00px;background:#c2c2c2;"></div>
<div class="b" style="left:118.00px;top:745.00px;width:27.00px;height:1.00px;background:#c2c2c2;"></div>
<div class="t" style="top:385.57px;font-size:13.50px;line-height:13.50px;color:#262626;left:-270.00px;width:800.00px;text-align:center;">9</div>
<div class="t" style="top:499.57px;font-size:13.50px;line-height:13.50px;color:#262626;left:-270.00px;width:800.00px;text-align:center;">10</div>
<div class="t" style="top:613.57px;font-size:13.50px;line-height:13.50px;color:#262626;left:-270.00px;width:800.00px;text-align:center;">11</div>
<div class="t" style="top:727.57px;font-size:13.50px;line-height:13.50px;color:#262626;left:-270.00px;width:800.00px;text-align:center;">12</div>
<div class="t" style="top:843.07px;font-size:13.50px;line-height:13.50px;color:#262626;left:-270.00px;width:800.00px;text-align:center;">13</div>
<div class="b" style="left:146.00px;top:402.75px;width:1620.00px;height:1.50px;background:#262626;"></div>
<div class="b" style="left:146.00px;top:516.75px;width:1620.00px;height:1.50px;background:#262626;"></div>
<div class="b" style="left:146.00px;top:630.75px;width:1620.00px;height:1.50px;background:#262626;"></div>
<div class="b" style="left:146.00px;top:744.75px;width:1620.00px;height:1.50px;background:#262626;"></div>
<div class="b" style="left:644.75px;top:289.50px;width:1.50px;height:563.50px;background:#262626;"></div>
<div class="b" style="left:895.75px;top:289.50px;width:1.50px;height:563.50px;background:#262626;"></div>
<div class="b" style="left:1282.25px;top:289.50px;width:1.50px;height:563.50px;background:#262626;"></div>
<div class="b" style="left:1591.25px;top:289.50px;width:1.50px;height:563.50px;background:#262626;"></div>
<div class="b" style="left:1666.25px;top:289.50px;width:1.50px;height:563.50px;background:#262626;"></div>
<div style="position:absolute;left:0;top:0;width:1907px;height:938px;clip-path:inset(289px 141px 85px 146px);">
<div class="t" style="top:338.80px;font-size:16.30px;line-height:16.30px;color:#262626;left:-4.25px;width:800.00px;text-align:center;transform:scaleX(0.9471);transform-origin:50% 0;">Desarrollo de actividades turísticas</div>
<div class="t" style="top:293.60px;font-size:16.30px;line-height:16.30px;color:#262626;left:899.60px;transform:scaleX(0.9397);transform-origin:0 0;">OE3.- Fortalecer el desarrollo económico de la</div>
<div class="t" style="top:316.95px;font-size:16.30px;line-height:16.30px;color:#262626;left:899.60px;transform:scaleX(0.9593);transform-origin:0 0;">parroquia, fomentando actividades productivas con</div>
<div class="t" style="top:340.30px;font-size:16.30px;line-height:16.30px;color:#262626;left:899.60px;transform:scaleX(0.9360);transform-origin:0 0;">sostenibilidad ambiental y con énfasis en la población</div>
<div class="t" style="top:363.65px;font-size:16.30px;line-height:16.30px;color:#262626;left:899.60px;transform:scaleX(0.9550);transform-origin:0 0;">de mayor vulnerabilidad.</div>
<div class="t" style="top:293.60px;font-size:16.30px;line-height:16.30px;color:#262626;left:1287.20px;transform:scaleX(0.9333);transform-origin:0 0;">Al 2023 se ha logrado brindar apoyo a</div>
<div class="t" style="top:316.95px;font-size:16.30px;line-height:16.30px;color:#262626;left:1287.20px;transform:scaleX(0.9375);transform-origin:0 0;">personas que participan en el desarrollo</div>
<div class="t" style="top:340.30px;font-size:16.30px;line-height:16.30px;color:#262626;left:1287.20px;transform:scaleX(0.9438);transform-origin:0 0;">económico de la parroquia con apoyo en</div>
<div class="t" style="top:363.65px;font-size:16.30px;line-height:16.30px;color:#262626;left:1287.20px;transform:scaleX(0.9461);transform-origin:0 0;">capacitación para la innovación de</div>
<div class="t" style="top:387.00px;font-size:16.30px;line-height:16.30px;color:#262626;left:1287.20px;transform:scaleX(0.9335);transform-origin:0 0;">negocios, mejora en la producción</div>
<div class="t" style="top:327.10px;font-size:16.30px;line-height:16.30px;color:#262626;left:656.30px;transform:scaleX(0.9387);transform-origin:0 0;">6.</div>
<div class="t" style="top:327.10px;font-size:16.30px;line-height:16.30px;color:#262626;left:695.40px;transform:scaleX(0.9059);transform-origin:0 0;">Cogestión de los GAD con la</div>
<div class="t" style="top:350.45px;font-size:16.30px;line-height:16.30px;color:#262626;left:371.00px;width:800.00px;text-align:center;transform:scaleX(0.9480);transform-origin:50% 0;">comunidad</div>
<div class="t" style="top:430.10px;font-size:16.30px;line-height:16.30px;color:#262626;left:-4.25px;width:800.00px;text-align:center;transform:scaleX(0.9563);transform-origin:50% 0;">Planificar, construir y mantener el sistema vial regional, la vialidad</div>
<div class="t" style="top:453.45px;font-size:16.30px;line-height:16.30px;color:#262626;left:-4.25px;width:800.00px;text-align:center;transform:scaleX(0.9459);transform-origin:50% 0;">urbana; y planificar y mantener en coordinación con los gobiernos</div>
<div class="t" style="top:476.80px;font-size:16.30px;line-height:16.30px;color:#262626;left:-4.25px;width:800.00px;text-align:center;transform:scaleX(0.9546);transform-origin:50% 0;">provinciales la vialidad parroquial rural.</div>
<div class="t" style="top:441.10px;font-size:16.30px;line-height:16.30px;color:#262626;left:662.20px;transform:scaleX(0.9387);transform-origin:0 0;">5.</div>
<div class="t" style="top:441.10px;font-size:16.30px;line-height:16.30px;color:#262626;left:702.00px;transform:scaleX(0.9704);transform-origin:0 0;">Gestión compartida entre</div>
<div class="t" style="top:464.45px;font-size:16.30px;line-height:16.30px;color:#262626;left:371.00px;width:800.00px;text-align:center;transform:scaleX(0.8981);transform-origin:50% 0;">diversos GAD</div>
<div class="t" style="top:407.60px;font-size:16.30px;line-height:16.30px;color:#262626;left:899.60px;transform:scaleX(0.9280);transform-origin:0 0;">OE4.- Consolidar los asentamientos humanos, a través</div>
<div class="t" style="top:430.95px;font-size:16.30px;line-height:16.30px;color:#262626;left:899.60px;transform:scaleX(0.9289);transform-origin:0 0;">de la mejora en los servicios públicos, en la vialidad</div>
<div class="t" style="top:454.30px;font-size:16.30px;line-height:16.30px;color:#262626;left:899.60px;transform:scaleX(0.9341);transform-origin:0 0;">urbana y rural y en la dotación de espacios públicos</div>
<div class="t" style="top:477.65px;font-size:16.30px;line-height:16.30px;color:#262626;left:899.60px;transform:scaleX(0.9580);transform-origin:0 0;">inclusivos para la recreación y entretenimiento.</div>
<div class="t" style="top:407.60px;font-size:16.30px;line-height:16.30px;color:#262626;left:1287.20px;transform:scaleX(0.9545);transform-origin:0 0;">Intervenir en 2 kilómetros de vía</div>
<div class="t" style="top:430.95px;font-size:16.30px;line-height:16.30px;color:#262626;left:1287.20px;transform:scaleX(0.9437);transform-origin:0 0;">de la cabecera parroquial hasta el 2023</div>
<div class="t" style="top:555.00px;font-size:16.30px;line-height:16.30px;color:#262626;left:-4.25px;width:800.00px;text-align:center;transform:scaleX(0.9575);transform-origin:50% 0;">Planificar el desarrollo territorial y formular los correspondientes planes</div>
<div class="t" style="top:578.35px;font-size:16.30px;line-height:16.30px;color:#262626;left:-4.25px;width:800.00px;text-align:center;transform:scaleX(0.9986);transform-origin:50% 0;">de ordenamiento territorial</div>
<div class="t" style="top:555.10px;font-size:16.30px;line-height:16.30px;color:#262626;left:662.20px;transform:scaleX(0.9387);transform-origin:0 0;">5.</div>
<div class="t" style="top:555.10px;font-size:16.30px;line-height:16.30px;color:#262626;left:702.00px;transform:scaleX(0.9704);transform-origin:0 0;">Gestión compartida entre</div>
<div class="t" style="top:578.45px;font-size:16.30px;line-height:16.30px;color:#262626;left:371.00px;width:800.00px;text-align:center;transform:scaleX(0.8981);transform-origin:50% 0;">diversos GAD</div>
<div class="t" style="top:521.60px;font-size:16.30px;line-height:16.30px;color:#262626;left:899.60px;transform:scaleX(0.9280);transform-origin:0 0;">OE4.- Consolidar los asentamientos humanos, a través</div>
<div class="t" style="top:544.95px;font-size:16.30px;line-height:16.30px;color:#262626;left:899.60px;transform:scaleX(0.9289);transform-origin:0 0;">de la mejora en los servicios públicos, en la vialidad</div>
<div class="t" style="top:568.30px;font-size:16.30px;line-height:16.30px;color:#262626;left:899.60px;transform:scaleX(0.9341);transform-origin:0 0;">urbana y rural y en la dotación de espacios públicos</div>
<div class="t" style="top:591.65px;font-size:16.30px;line-height:16.30px;color:#262626;left:899.60px;transform:scaleX(0.9580);transform-origin:0 0;">inclusivos para la recreación y entretenimiento.</div>
<div class="t" style="top:521.60px;font-size:16.30px;line-height:16.30px;color:#262626;left:1287.20px;transform:scaleX(0.9381);transform-origin:0 0;">Gestionar ante el GAD Cantonal estudios</div>
<div class="t" style="top:544.95px;font-size:16.30px;line-height:16.30px;color:#262626;left:1287.20px;transform:scaleX(1.0035);transform-origin:0 0;">de factibilidad para el sistema de agua</div>
<div class="t" style="top:568.30px;font-size:16.30px;line-height:16.30px;color:#262626;left:1287.20px;transform:scaleX(0.9458);transform-origin:0 0;">potable de la cabecera parroquial hasta el</div>
<div class="t" style="top:591.65px;font-size:16.30px;line-height:16.30px;color:#262626;left:1287.20px;transform:scaleX(0.9183);transform-origin:0 0;">2023</div>
<div class="t" style="top:669.00px;font-size:16.30px;line-height:16.30px;color:#262626;left:-4.25px;width:800.00px;text-align:center;transform:scaleX(0.9575);transform-origin:50% 0;">Planificar el desarrollo territorial y formular los correspondientes planes</div>
<div class="t" style="top:692.35px;font-size:16.30px;line-height:16.30px;color:#262626;left:-4.25px;width:800.00px;text-align:center;transform:scaleX(0.9986);transform-origin:50% 0;">de ordenamiento territorial</div>
<div class="t" style="top:669.10px;font-size:16.30px;line-height:16.30px;color:#262626;left:662.20px;transform:scaleX(0.9387);transform-origin:0 0;">5.</div>
<div class="t" style="top:669.10px;font-size:16.30px;line-height:16.30px;color:#262626;left:702.00px;transform:scaleX(0.9704);transform-origin:0 0;">Gestión compartida entre</div>
<div class="t" style="top:692.45px;font-size:16.30px;line-height:16.30px;color:#262626;left:371.00px;width:800.00px;text-align:center;transform:scaleX(0.8981);transform-origin:50% 0;">diversos GAD</div>
<div class="t" style="top:635.60px;font-size:16.30px;line-height:16.30px;color:#262626;left:899.60px;transform:scaleX(0.9280);transform-origin:0 0;">OE4.- Consolidar los asentamientos humanos, a través</div>
<div class="t" style="top:658.95px;font-size:16.30px;line-height:16.30px;color:#262626;left:899.60px;transform:scaleX(0.9289);transform-origin:0 0;">de la mejora en los servicios públicos, en la vialidad</div>
<div class="t" style="top:682.30px;font-size:16.30px;line-height:16.30px;color:#262626;left:899.60px;transform:scaleX(0.9341);transform-origin:0 0;">urbana y rural y en la dotación de espacios públicos</div>
<div class="t" style="top:705.65px;font-size:16.30px;line-height:16.30px;color:#262626;left:899.60px;transform:scaleX(0.9580);transform-origin:0 0;">inclusivos para la recreación y entretenimiento.</div>
<div class="t" style="top:635.90px;font-size:16.30px;line-height:16.30px;color:#262626;left:1287.50px;transform:scaleX(0.9716);transform-origin:0 0;">Intervenir en 3 recintos para mejorar el</div>
<div class="t" style="top:659.25px;font-size:16.30px;line-height:16.30px;color:#262626;left:1287.50px;transform:scaleX(0.9236);transform-origin:0 0;">acceso al servicio de agua para consumo</div>
<div class="t" style="top:682.60px;font-size:16.30px;line-height:16.30px;color:#262626;left:1287.50px;transform:scaleX(0.9342);transform-origin:0 0;">humano hasta el 2023</div>
<div class="t" style="top:681.90px;font-size:16.30px;line-height:16.30px;color:#262626;left:1601.50px;transform:scaleX(0.8797);transform-origin:0 0;">ODS10_</div>
<div class="t" style="top:681.90px;font-size:16.30px;line-height:16.30px;color:#262626;left:1728.30px;transform:scaleX(0.9387);transform-origin:0 0;">10 Reducción</div>
<div class="t" style="top:772.10px;font-size:16.30px;line-height:16.30px;color:#262626;left:-4.25px;width:800.00px;text-align:center;transform:scaleX(0.9563);transform-origin:50% 0;">Planificar, construir y mantener el sistema vial regional, la vialidad</div>
<div class="t" style="top:795.45px;font-size:16.30px;line-height:16.30px;color:#262626;left:-4.25px;width:800.00px;text-align:center;transform:scaleX(0.9459);transform-origin:50% 0;">urbana; y planificar y mantener en coordinación con los gobiernos</div>
<div class="t" style="top:818.80px;font-size:16.30px;line-height:16.30px;color:#262626;left:-4.25px;width:800.00px;text-align:center;transform:scaleX(0.9546);transform-origin:50% 0;">provinciales la vialidad parroquial rural.</div>
<div class="t" style="top:783.10px;font-size:16.30px;line-height:16.30px;color:#262626;left:651.40px;transform:scaleX(0.9387);transform-origin:0 0;">4.</div>
<div class="t" style="top:783.10px;font-size:16.30px;line-height:16.30px;color:#262626;left:691.20px;transform:scaleX(0.9292);transform-origin:0 0;">Delegación a otros niveles de</div>
<div class="t" style="top:806.45px;font-size:16.30px;line-height:16.30px;color:#262626;left:371.00px;width:800.00px;text-align:center;transform:scaleX(0.9615);transform-origin:50% 0;">gobierno</div>
<div class="t" style="top:750.20px;font-size:16.30px;line-height:16.30px;color:#262626;left:899.60px;transform:scaleX(0.9280);transform-origin:0 0;">OE4.- Consolidar los asentamientos humanos, a través</div>
<div class="t" style="top:773.55px;font-size:16.30px;line-height:16.30px;color:#262626;left:899.60px;transform:scaleX(0.9289);transform-origin:0 0;">de la mejora en los servicios públicos, en la vialidad</div>
<div class="t" style="top:796.90px;font-size:16.30px;line-height:16.30px;color:#262626;left:899.60px;transform:scaleX(0.9341);transform-origin:0 0;">urbana y rural y en la dotación de espacios públicos</div>
<div class="t" style="top:820.25px;font-size:16.30px;line-height:16.30px;color:#262626;left:899.60px;transform:scaleX(0.9580);transform-origin:0 0;">inclusivos para la recreación y entretenimiento.</div>
<div class="t" style="top:749.90px;font-size:16.30px;line-height:16.30px;color:#262626;left:1287.50px;transform:scaleX(0.9565);transform-origin:0 0;">Incrementar al 60% la cobertura de la</div>
<div class="t" style="top:773.25px;font-size:16.30px;line-height:16.30px;color:#262626;left:1287.50px;transform:scaleX(0.9124);transform-origin:0 0;">recolección de desechos sólidos en la</div>
<div class="t" style="top:796.60px;font-size:16.30px;line-height:16.30px;color:#262626;left:1287.50px;transform:scaleX(0.9458);transform-origin:0 0;">parroquia hasta el 2023</div>
<div class="t" style="top:797.10px;font-size:16.30px;line-height:16.30px;color:#262626;left:1601.50px;transform:scaleX(0.8797);transform-origin:0 0;">ODS12_</div>
<div class="t" style="top:797.10px;font-size:16.30px;line-height:16.30px;color:#262626;left:1714.00px;transform:scaleX(0.9387);transform-origin:0 0;">12 Producción</div>
</div>
<div class="b" style="left:1282.00px;top:744.50px;width:311.00px;height:111.50px;border:2px solid #217346;"></div>
<div class="b" style="left:1766.00px;top:289.00px;width:27.00px;height:564.00px;background:#e6e6e6;"></div>
<div class="b" style="left:1786.00px;top:212.00px;width:7.00px;height:77.00px;background:#e2e2e2;"></div>
<div class="b" style="left:1785.00px;top:272.00px;width:4.00px;height:18.00px;background:#fff;border:1px solid #999;"></div>
<div class="b" style="left:1785.00px;top:291.00px;width:4.00px;height:19.00px;background:#fff;border:1px solid #999;"></div>
<div class="b" style="left:1771.00px;top:836.00px;width:18.00px;height:17.00px;background:#fff;border:1px solid #9b9b9b;"></div>
<svg style="left:1775px;top:842px" width="10" height="6"><path d="M0 0 L10 0 L5 5Z" fill="#606060"/></svg>
<div class="b" style="left:114.00px;top:853.00px;width:1679.00px;height:34.00px;background:#e6e6e6;border-top:1px solid #b8b8b8;"></div>
<div class="b" style="left:114.00px;top:887.00px;width:1679.00px;height:27.00px;background:#f3f3f3;border-top:1px solid #d8d8d8;"></div>
<svg style="left:146px;top:864px" width="8" height="12"><path d="M7 1 L1 6 L7 11Z" fill="#c2c2c2"/></svg>
<svg style="left:181px;top:864px" width="8" height="12"><path d="M1 1 L7 6 L1 11Z" fill="#b0b0b0"/></svg>
<div class="b" style="left:237.50px;top:853.00px;width:81.00px;height:31.00px;background:#fff;border-left:1px solid #b8b8b8;border-right:1px solid #b8b8b8;"></div>
<div class="b" style="left:237.50px;top:881.00px;width:81.00px;height:3.00px;background:#217346;"></div>
<div class="t" style="top:862.71px;font-size:15.70px;line-height:15.70px;color:#1f5f3c;font-weight:bold;left:-122.00px;width:800.00px;text-align:center;transform:scaleX(0.9669);transform-origin:50% 0;">TAURA</div>
<svg style="left:359px;top:859px" width="22" height="22"><circle cx="10.7" cy="10.8" r="9.2" fill="none" stroke="#777" stroke-width="1.3"/><path d="M10.7 5.5 V16 M5.5 10.8 H16" stroke="#666" stroke-width="1.8"/></svg>
<div class="b" style="left:1121.00px;top:866.00px;width:2.00px;height:2.00px;background:#a8a8a8;"></div>
<div class="b" style="left:1121.00px;top:870.50px;width:2.00px;height:2.00px;background:#a8a8a8;"></div>
<div class="b" style="left:1121.00px;top:875.00px;width:2.00px;height:2.00px;background:#a8a8a8;"></div>
<div class="b" style="left:1141.50px;top:861.50px;width:625.00px;height:18.00px;background:#dedede;"></div>
<div class="b" style="left:1141.50px;top:861.50px;width:253.50px;height:18.00px;background:#fff;border:1px solid #8a8a8a;"></div>
<div class="b" style="left:1160.00px;top:861.50px;width:1.50px;height:18.00px;background:#8a8a8a;"></div>
<svg style="left:1147px;top:866px" width="8" height="10"><path d="M6 0 L0 5 L6 10Z" fill="#555"/></svg>
<div class="b" style="left:1749.00px;top:861.50px;width:18.00px;height:18.00px;background:#fff;border:1px solid #8a8a8a;"></div>
<svg style="left:1755px;top:866px" width="8" height="10"><path d="M1 0 L7 5 L1 10Z" fill="#555"/></svg>
<div class="b" style="left:1766.00px;top:853.00px;width:27.00px;height:34.00px;background:#f0f0f0;"></div>
<div class="t" style="top:893.90px;font-size:13.70px;line-height:13.70px;color:#444;left:124.00px;transform:scaleX(1.0021);transform-origin:0 0;">Listo</div>
<div class="b" style="left:1432.00px;top:888.00px;width:49.00px;height:26.00px;background:#c8c8c8;"></div>
<svg style="left:1447px;top:892px" width="18" height="18"><path d="M1 1 H17 V17 H1Z M1 6.3 H17 M1 11.6 H17 M6.3 1 V17 M11.6 1 V17" fill="none" stroke="#666" stroke-width="1.3"/></svg>
<svg style="left:1496px;top:892px" width="18" height="18"><path d="M1 1 H17 V17 H1Z M4 4 H14 V14 H4Z M6.5 7 H11.5 M6.5 9.5 H11.5 M6.5 12 H11.5" fill="none" stroke="#777" stroke-width="1.2"/></svg>
<svg style="left:1545px;top:891px" width="18" height="18"><path d="M1 1 H17 V17 H1Z M1 11 H17 M6 1 V11 M12 1 V11" fill="none" stroke="#777" stroke-width="1.2"/></svg>
<div class="b" style="left:1586.00px;top:900.50px;width:11.00px;height:2.00px;background:#666;"></div>
<div class="b" style="left:1602.00px;top:900.50px;width:124.00px;height:1.00px;background:#444;"></div>
<div class="b" style="left:1655.00px;top:894.00px;width:6.00px;height:14.00px;background:#666;"></div>
<div class="b" style="left:1663.00px;top:896.00px;width:1.00px;height:10.00px;background:#666;"></div>
<svg style="left:1730px;top:894px" width="14" height="14"><path d="M7 1 V13 M1 7 H13" stroke="#555" stroke-width="1.5"/></svg>
<div class="t" style="top:895.00px;font-size:13.00px;line-height:13.00px;color:#444;left:1370.00px;width:800.00px;text-align:center;transform:scaleX(0.9993);transform-origin:50% 0;">90%</div>
<svg style="left:1510.0px;top:19.0px" width="276.0" height="155.0" viewBox="0 0 276.0 155.0"><defs><filter id="bl1529" x="-10%" y="-10%" width="120%" height="120%"><feGaussianBlur stdDeviation="2"/></filter><clipPath id="cp1529"><rect x="0" y="0" width="276.0" height="155.0"/></clipPath></defs><g clip-path="url(#cp1529)"><g filter="url(#bl1529)"><rect x="-5" y="-5" width="290" height="170" fill="#f8f8f6"/><polygon points="-5.0,89.2 70.7,87.5 70.7,161.4 -5.0,161.4" fill="#eec39c"/><polygon points="197.3,98.9 285.3,98.9 285.3,161.4 197.3,161.4" fill="#eec39c"/><path d="M 31.9,156.1 C 44.3,129.7 53.1,108.6 63.6,94.5 C 70.7,80.4 67.1,62.9 77.7,40.0 C 86.5,18.9 100.6,3.0 121.7,1.3 C 144.5,0.4 163.9,13.6 176.2,34.7 C 186.8,54.1 188.5,76.9 199.1,96.3 C 206.1,106.8 218.4,112.1 214.9,122.7 C 206.1,135.0 192.0,142.0 170.9,143.8 L 162.1,122.7 L 118.2,122.7 L 111.1,154.3 Z" fill="#2a2321"/><ellipse cx="134.9" cy="64.6" rx="37.5" ry="44" fill="#d9ab97"/><path d="M 142.8,10.1 C 162.1,15.4 174.5,31.2 176.2,52.3 L 170.9,54.1 C 165.7,36.5 155.1,25.9 139.3,20.6 Z" fill="#2a2321"/><path d="M 100.6,17.1 C 93.5,27.7 90.0,41.7 93.5,54.1 L 98.8,40.0 C 102.3,29.4 107.6,22.4 114.6,17.1 Z" fill="#2a2321"/><polygon points="116.4,101.6 162.1,101.6 168.3,147.3 172.7,157.9 104.1,157.9 112.9,140.3" fill="#cfa18c"/><polygon points="153.3,129.7 190.3,129.7 190.3,161.4 153.3,161.4" fill="#c99a86"/><polygon points="186.8,131.5 222.0,122.7 251.9,126.2 285.3,149.1 285.3,161.4 181.5,161.4 188.5,143.8" fill="#d64a3b"/><polygon points="28.4,161.4 35.5,145.5 65.4,140.3 93.5,145.5 107.6,161.4" fill="#d64a3b"/><ellipse cx="114.6" cy="52.3" rx="8.5" ry="2.8" fill="#765650"/><ellipse cx="149.8" cy="52.3" rx="8.5" ry="2.8" fill="#765650"/><ellipse cx="134.0" cy="62.9" rx="4" ry="6" fill="#c09080"/><ellipse cx="134.0" cy="78.7" rx="14" ry="6.5" fill="#8e6a78"/><ellipse cx="134.0" cy="77.3" rx="9" ry="2.5" fill="#d8c8d0"/></g></g></svg>
<div class="b" style="left:1510.00px;top:176.60px;width:276.00px;height:154.80px;background:#1e1e1e;"></div>
<svg style="left:1589.0px;top:176.6px" width="116.0" height="154.8" viewBox="0 0 116.0 154.8"><defs><filter id="bl1765" x="-10%" y="-10%" width="120%" height="120%"><feGaussianBlur stdDeviation="2"/></filter><clipPath id="cp1765"><rect x="0" y="0" width="116.0" height="154.8"/></clipPath></defs><g clip-path="url(#cp1765)"><g filter="url(#bl1765)"><rect x="-5" y="-5" width="130" height="165" fill="#3aa4d8"/><polygon points="-9.0,-3.0 94.6,-3.0 87.7,9.1 -9.0,25.5" fill="#6e7e8c"/><path d="-9.0,3.9 87.7,-1.3" stroke="#a8b4bc" stroke-width="1" fill="none"/><path d="-9.0,8.7 87.7,0.8" stroke="#a8b4bc" stroke-width="1" fill="none"/><path d="-9.0,13.6 87.7,2.9" stroke="#a8b4bc" stroke-width="1" fill="none"/><path d="-9.0,18.4 87.7,4.9" stroke="#a8b4bc" stroke-width="1" fill="none"/><path d="-9.0,23.2 87.7,7.0" stroke="#a8b4bc" stroke-width="1" fill="none"/><polygon points="92.0,26.3 98.9,26.3 98.9,76.4 92.0,76.4" fill="#2f78b8"/><polygon points="92.0,28.1 117.0,28.1 117.0,37.6 92.0,37.6" fill="#2f78b8"/><polygon points="94.6,57.4 117.0,55.7 117.0,66.0 94.6,67.8" fill="#2f78b8"/><polygon points="84.2,-3.0 94.6,-3.0 87.7,28.1 80.8,28.1" fill="#4a90c8"/><ellipse cx="111.8" cy="9.1" rx="10" ry="12" fill="#d8d6b8"/><path d="M 37.6,54.0 C 35.9,28.1 48.0,16.9 63.5,16.9 C 79.0,16.9 89.4,28.1 87.7,54.0 Z" fill="#3a302e"/><path d="M 40.2,48.8 C 41.1,35.0 51.4,29.8 63.5,30.7 C 77.3,31.5 85.1,38.4 84.2,54.0 C 83.4,74.7 73.9,88.5 61.8,88.5 C 48.0,88.5 39.3,74.7 40.2,48.8 Z" fill="#9a7c70"/><rect x="35.9" y="50.5" width="22" height="16" rx="4" fill="#9c8a84" stroke="#141414" stroke-width="3.6"/><rect x="62.6" y="49.6" width="22" height="16" rx="4" fill="#9c8a84" stroke="#141414" stroke-width="3.6"/><polygon points="-9.0,93.7 16.9,81.6 42.8,78.1 87.7,74.7 118.7,73.0 118.7,159.3 -9.0,159.3" fill="#9c9c9c"/><ellipse cx="109.6" cy="112.9" rx="4.0" ry="3.0" fill="#151515"/><ellipse cx="95.0" cy="113.7" rx="4.3" ry="2.2" fill="#d8d8d8"/><ellipse cx="34.6" cy="82.8" rx="4.9" ry="3.2" fill="#0e0e0e"/><ellipse cx="98.4" cy="80.6" rx="2.6" ry="3.6" fill="#1a1a1a"/><ellipse cx="1.5" cy="112.8" rx="3.8" ry="3.5" fill="#1a1a1a"/><ellipse cx="26.1" cy="99.2" rx="2.5" ry="2.0" fill="#f0f0f0"/><ellipse cx="31.5" cy="155.6" rx="5.5" ry="3.5" fill="#f0f0f0"/><ellipse cx="28.6" cy="136.4" rx="4.0" ry="1.9" fill="#1a1a1a"/><ellipse cx="90.5" cy="107.7" rx="5.0" ry="2.6" fill="#0e0e0e"/><ellipse cx="100.3" cy="75.6" rx="3.1" ry="3.6" fill="#d8d8d8"/><ellipse cx="43.3" cy="132.4" rx="3.8" ry="2.9" fill="#151515"/><ellipse cx="92.0" cy="97.2" rx="2.8" ry="2.5" fill="#d8d8d8"/><ellipse cx="89.5" cy="85.0" rx="3.2" ry="2.0" fill="#0e0e0e"/><ellipse cx="80.3" cy="90.7" rx="4.0" ry="3.8" fill="#151515"/><ellipse cx="45.6" cy="155.0" rx="2.5" ry="3.5" fill="#1a1a1a"/><ellipse cx="34.7" cy="146.6" rx="3.1" ry="2.6" fill="#1a1a1a"/><ellipse cx="117.4" cy="92.7" rx="3.3" ry="3.3" fill="#e8e8e8"/><ellipse cx="98.2" cy="106.5" rx="2.7" ry="2.2" fill="#f0f0f0"/><ellipse cx="27.3" cy="123.8" rx="3.6" ry="2.7" fill="#1a1a1a"/><ellipse cx="102.6" cy="90.2" rx="3.0" ry="3.6" fill="#1a1a1a"/><ellipse cx="28.1" cy="90.8" rx="4.7" ry="3.7" fill="#151515"/><ellipse cx="80.9" cy="106.7" rx="3.9" ry="2.0" fill="#0e0e0e"/><ellipse cx="10.5" cy="78.6" rx="5.4" ry="2.3" fill="#f0f0f0"/><ellipse cx="107.2" cy="115.0" rx="4.1" ry="3.7" fill="#0e0e0e"/><ellipse cx="13.2" cy="114.0" rx="4.5" ry="3.0" fill="#0e0e0e"/><ellipse cx="31.8" cy="149.2" rx="3.1" ry="1.8" fill="#e8e8e8"/><ellipse cx="3.5" cy="98.2" rx="4.1" ry="3.7" fill="#0e0e0e"/><ellipse cx="41.7" cy="147.1" rx="5.4" ry="3.1" fill="#f0f0f0"/><ellipse cx="61.0" cy="151.5" rx="4.3" ry="3.6" fill="#d8d8d8"/><ellipse cx="107.9" cy="131.8" rx="5.4" ry="1.8" fill="#f0f0f0"/><ellipse cx="6.9" cy="80.9" rx="3.4" ry="2.1" fill="#0e0e0e"/><ellipse cx="7.0" cy="119.4" rx="4.7" ry="3.6" fill="#f0f0f0"/><ellipse cx="87.0" cy="85.9" rx="5.4" ry="2.5" fill="#0e0e0e"/><ellipse cx="80.7" cy="147.9" rx="5.1" ry="2.6" fill="#0e0e0e"/><ellipse cx="102.2" cy="121.5" rx="4.4" ry="2.6" fill="#1a1a1a"/><ellipse cx="-0.6" cy="81.3" rx="2.8" ry="2.0" fill="#e8e8e8"/><ellipse cx="104.2" cy="134.0" rx="3.7" ry="3.3" fill="#1a1a1a"/><ellipse cx="8.5" cy="77.3" rx="5.4" ry="2.0" fill="#1a1a1a"/><ellipse cx="106.2" cy="105.1" rx="2.9" ry="3.0" fill="#1a1a1a"/><ellipse cx="18.4" cy="148.2" rx="4.5" ry="2.7" fill="#151515"/><ellipse cx="37.4" cy="129.0" rx="3.1" ry="2.7" fill="#151515"/><ellipse cx="104.3" cy="106.4" rx="4.2" ry="2.4" fill="#151515"/><ellipse cx="14.2" cy="103.7" rx="5.2" ry="1.9" fill="#0e0e0e"/><ellipse cx="112.7" cy="97.8" rx="3.0" ry="2.7" fill="#e8e8e8"/><ellipse cx="109.8" cy="142.2" rx="3.6" ry="2.8" fill="#f0f0f0"/><ellipse cx="36.0" cy="142.9" rx="5.4" ry="2.7" fill="#0e0e0e"/><ellipse cx="98.0" cy="97.9" rx="4.3" ry="3.2" fill="#e8e8e8"/><ellipse cx="93.5" cy="77.1" rx="2.9" ry="2.7" fill="#0e0e0e"/><ellipse cx="90.9" cy="96.9" rx="4.8" ry="3.4" fill="#f0f0f0"/><ellipse cx="11.8" cy="84.3" rx="4.1" ry="3.1" fill="#e8e8e8"/><ellipse cx="113.7" cy="130.5" rx="3.1" ry="2.8" fill="#151515"/><ellipse cx="84.2" cy="136.2" rx="4.1" ry="1.9" fill="#151515"/><ellipse cx="30.8" cy="103.3" rx="4.6" ry="2.8" fill="#1a1a1a"/><ellipse cx="118.4" cy="88.3" rx="5.0" ry="3.2" fill="#151515"/><ellipse cx="8.4" cy="150.4" rx="4.7" ry="2.1" fill="#d8d8d8"/><ellipse cx="21.7" cy="146.8" rx="2.5" ry="2.9" fill="#f0f0f0"/><ellipse cx="104.2" cy="139.5" rx="5.3" ry="2.7" fill="#f0f0f0"/><ellipse cx="116.6" cy="83.5" rx="5.1" ry="3.4" fill="#f0f0f0"/><ellipse cx="12.8" cy="95.0" rx="3.7" ry="2.0" fill="#e8e8e8"/><ellipse cx="36.6" cy="148.6" rx="5.1" ry="2.5" fill="#0e0e0e"/><ellipse cx="2.4" cy="103.0" rx="3.8" ry="2.4" fill="#0e0e0e"/><ellipse cx="24.3" cy="145.2" rx="3.8" ry="1.9" fill="#1a1a1a"/><ellipse cx="38.4" cy="138.8" rx="2.9" ry="2.1" fill="#1a1a1a"/><ellipse cx="106.7" cy="117.1" rx="4.5" ry="2.7" fill="#d8d8d8"/><ellipse cx="89.5" cy="110.8" rx="4.2" ry="3.5" fill="#1a1a1a"/><ellipse cx="99.8" cy="120.5" rx="3.4" ry="2.6" fill="#1a1a1a"/><ellipse cx="23.1" cy="143.8" rx="5.4" ry="2.8" fill="#1a1a1a"/><ellipse cx="11.7" cy="75.9" rx="3.6" ry="2.9" fill="#0e0e0e"/><ellipse cx="94.7" cy="120.7" rx="4.0" ry="3.2" fill="#0e0e0e"/><ellipse cx="110.4" cy="112.4" rx="5.3" ry="3.4" fill="#d8d8d8"/><ellipse cx="30.4" cy="113.5" rx="2.9" ry="2.7" fill="#d8d8d8"/><ellipse cx="29.3" cy="131.9" rx="5.4" ry="1.9" fill="#151515"/><ellipse cx="25.4" cy="130.7" rx="3.5" ry="2.5" fill="#1a1a1a"/><ellipse cx="68.3" cy="143.9" rx="4.4" ry="3.2" fill="#f0f0f0"/><ellipse cx="43.3" cy="108.7" rx="4.1" ry="2.1" fill="#151515"/><ellipse cx="102.3" cy="118.4" rx="3.2" ry="2.2" fill="#1a1a1a"/><ellipse cx="71.8" cy="144.3" rx="3.2" ry="3.3" fill="#e8e8e8"/><ellipse cx="107.0" cy="100.9" rx="3.4" ry="3.6" fill="#151515"/><ellipse cx="92.0" cy="91.2" rx="2.8" ry="3.6" fill="#151515"/><ellipse cx="85.7" cy="96.4" rx="2.8" ry="3.5" fill="#d8d8d8"/><ellipse cx="22.2" cy="126.0" rx="4.9" ry="2.0" fill="#1a1a1a"/><ellipse cx="80.4" cy="148.7" rx="5.4" ry="2.0" fill="#1a1a1a"/><ellipse cx="118.6" cy="142.4" rx="4.9" ry="2.8" fill="#0e0e0e"/><ellipse cx="2.4" cy="119.8" rx="4.0" ry="2.9" fill="#151515"/><ellipse cx="20.8" cy="84.8" rx="3.0" ry="2.1" fill="#e8e8e8"/><ellipse cx="109.9" cy="83.2" rx="2.7" ry="3.7" fill="#d8d8d8"/><ellipse cx="7.3" cy="83.3" rx="3.7" ry="2.7" fill="#e8e8e8"/><ellipse cx="-0.5" cy="131.8" rx="5.0" ry="2.2" fill="#d8d8d8"/><ellipse cx="41.4" cy="105.3" rx="5.3" ry="3.0" fill="#0e0e0e"/><ellipse cx="105.8" cy="139.9" rx="4.6" ry="3.5" fill="#f0f0f0"/><ellipse cx="111.4" cy="121.3" rx="3.1" ry="3.0" fill="#e8e8e8"/><ellipse cx="95.2" cy="96.3" rx="5.2" ry="3.3" fill="#151515"/><ellipse cx="96.3" cy="108.1" rx="5.2" ry="3.6" fill="#f0f0f0"/><ellipse cx="42.6" cy="110.2" rx="3.0" ry="2.2" fill="#151515"/><ellipse cx="6.4" cy="103.0" rx="3.9" ry="1.8" fill="#e8e8e8"/><ellipse cx="117.6" cy="148.0" rx="2.6" ry="2.3" fill="#f0f0f0"/><ellipse cx="34.0" cy="92.9" rx="3.7" ry="2.2" fill="#0e0e0e"/><ellipse cx="45.0" cy="155.8" rx="4.4" ry="3.2" fill="#d8d8d8"/><ellipse cx="116.3" cy="77.4" rx="4.3" ry="3.3" fill="#e8e8e8"/><ellipse cx="89.9" cy="127.6" rx="2.5" ry="2.3" fill="#e8e8e8"/><ellipse cx="107.3" cy="119.7" rx="4.0" ry="3.7" fill="#1a1a1a"/><ellipse cx="100.2" cy="83.5" rx="3.8" ry="3.1" fill="#1a1a1a"/><ellipse cx="3.4" cy="150.2" rx="3.0" ry="2.7" fill="#151515"/><ellipse cx="101.3" cy="119.0" rx="4.3" ry="2.7" fill="#d8d8d8"/><ellipse cx="32.4" cy="128.1" rx="4.2" ry="2.4" fill="#f0f0f0"/><ellipse cx="88.3" cy="77.7" rx="4.8" ry="3.0" fill="#f0f0f0"/><ellipse cx="16.8" cy="136.1" rx="3.7" ry="3.6" fill="#f0f0f0"/><ellipse cx="85.3" cy="101.2" rx="4.9" ry="2.2" fill="#f0f0f0"/><ellipse cx="55.6" cy="153.7" rx="3.2" ry="2.8" fill="#f0f0f0"/><ellipse cx="107.8" cy="87.1" rx="5.4" ry="2.3" fill="#f0f0f0"/><ellipse cx="11.8" cy="125.7" rx="3.9" ry="2.2" fill="#0e0e0e"/><ellipse cx="41.0" cy="88.0" rx="3.6" ry="2.1" fill="#d8d8d8"/><ellipse cx="91.9" cy="118.1" rx="5.5" ry="3.7" fill="#f0f0f0"/><ellipse cx="13.5" cy="114.2" rx="4.0" ry="2.4" fill="#1a1a1a"/><ellipse cx="30.7" cy="130.5" rx="4.2" ry="3.0" fill="#f0f0f0"/><ellipse cx="31.6" cy="94.8" rx="5.4" ry="2.8" fill="#f0f0f0"/><ellipse cx="108.6" cy="146.1" rx="2.6" ry="1.9" fill="#e8e8e8"/><ellipse cx="29.3" cy="77.7" rx="2.6" ry="2.2" fill="#e8e8e8"/><ellipse cx="6.7" cy="82.5" rx="4.5" ry="2.9" fill="#f0f0f0"/><ellipse cx="116.5" cy="114.4" rx="3.6" ry="2.5" fill="#d8d8d8"/><ellipse cx="87.9" cy="142.9" rx="2.7" ry="2.0" fill="#1a1a1a"/><ellipse cx="99.2" cy="137.3" rx="3.8" ry="3.3" fill="#d8d8d8"/><ellipse cx="95.8" cy="105.2" rx="4.5" ry="3.8" fill="#e8e8e8"/><ellipse cx="33.1" cy="136.5" rx="5.0" ry="2.2" fill="#f0f0f0"/><ellipse cx="42.5" cy="83.3" rx="5.1" ry="2.0" fill="#0e0e0e"/><ellipse cx="96.4" cy="112.7" rx="5.0" ry="1.8" fill="#e8e8e8"/><ellipse cx="23.7" cy="128.7" rx="2.7" ry="2.4" fill="#f0f0f0"/><ellipse cx="90.2" cy="101.9" rx="5.1" ry="2.2" fill="#f0f0f0"/><ellipse cx="85.6" cy="105.0" rx="2.9" ry="3.2" fill="#1a1a1a"/><ellipse cx="69.8" cy="148.0" rx="4.6" ry="2.4" fill="#1a1a1a"/><ellipse cx="94.9" cy="100.0" rx="3.5" ry="2.6" fill="#f0f0f0"/><ellipse cx="106.0" cy="95.5" rx="3.6" ry="2.5" fill="#e8e8e8"/><ellipse cx="79.7" cy="122.5" rx="4.9" ry="3.3" fill="#e8e8e8"/><path d="M 48.0,71.2 C 56.6,78.1 70.4,78.1 79.0,71.2 L 80.8,90.2 L 46.2,90.2 Z" fill="#8e7068"/><path d="M 46.2,86.8 C 56.6,93.7 70.4,93.7 79.0,86.8 L 80.8,142.0 L 44.5,142.0 Z" fill="#4e3834"/><ellipse cx="72.1" cy="148.9" rx="30" ry="9" fill="#c4a596"/></g></g></svg>
<div class="b" style="left:1510.00px;top:334.30px;width:276.00px;height:154.30px;background:#1e1e1e;"></div>
<svg style="left:1589.0px;top:334.3px" width="116.0" height="154.3" viewBox="0 0 116.0 154.3"><defs><filter id="bl1923" x="-10%" y="-10%" width="120%" height="120%"><feGaussianBlur stdDeviation="2"/></filter><clipPath id="cp1923"><rect x="0" y="0" width="116.0" height="154.3"/></clipPath></defs><g clip-path="url(#cp1923)"><g filter="url(#bl1923)"><rect x="-5" y="-5" width="130" height="165" fill="#dcdcd8"/><polygon points="49.0,-3.0 120.7,-3.0 120.7,77.2 55.9,77.2" fill="#dccab0"/><path d="62.7,-3.0 71.2,75.5" stroke="#c8ae90" stroke-width="1.3" fill="none"/><path d="71.2,-3.0 78.0,75.5" stroke="#c8ae90" stroke-width="1.3" fill="none"/><path d="79.8,-3.0 84.9,75.5" stroke="#c8ae90" stroke-width="1.3" fill="none"/><path d="88.3,-3.0 91.7,75.5" stroke="#c8ae90" stroke-width="1.3" fill="none"/><path d="96.8,-3.0 98.5,75.5" stroke="#c8ae90" stroke-width="1.3" fill="none"/><path d="105.4,-3.0 105.4,75.5" stroke="#c8ae90" stroke-width="1.3" fill="none"/><path d="113.9,-3.0 112.2,75.5" stroke="#c8ae90" stroke-width="1.3" fill="none"/><path d="2.9,34.5 16.6,70.4" stroke="#303030" stroke-width="2.2" fill="none"/><polygon points="-2.2,48.2 9.8,48.2 9.8,89.2 -2.2,89.2" fill="#3aa66c"/><polygon points="83.2,72.1 120.7,68.7 120.7,99.4 90.0,99.4" fill="#c8503e"/><path d="M 16.6,53.3 C 9.8,31.1 16.6,7.2 38.8,5.5 C 62.7,4.7 72.9,17.5 71.2,38.0 C 71.2,56.7 72.9,77.2 66.1,92.6 L 47.3,85.8 Z" fill="#272222"/><path d="M 16.6,38.0 C 18.3,24.3 30.3,19.2 42.2,20.9 C 57.6,22.6 62.7,34.5 61.0,48.2 C 59.3,65.3 50.7,77.2 40.5,77.2 C 25.1,77.2 16.6,58.4 16.6,38.0 Z" fill="#cda494"/><path d="M 13.2,31.1 C 16.6,14.1 30.3,7.2 45.6,8.9 C 59.3,10.7 66.1,20.9 66.1,27.7 C 55.9,19.2 35.4,17.5 16.6,36.3 Z" fill="#272222"/><polygon points="11.5,82.3 35.4,77.2 62.7,75.5 93.4,85.8 95.1,157.4 8.1,157.4" fill="#4c5a50"/><path d="M 25.1,92.6 C 35.4,85.8 45.6,85.8 55.9,92.6 L 69.5,157.4 L 20.0,157.4 Z" fill="#2e3230"/><path d="M 71.2,102.8 C 76.3,89.2 100.2,85.8 117.3,92.6 L 120.7,157.4 L 69.5,157.4 C 66.1,137.0 66.1,116.5 71.2,102.8 Z" fill="#d29a7c"/><path d="M -2.2,92.6 C 8.1,85.8 20.0,92.6 23.4,102.8 L 20.0,130.1 L -2.2,130.1 Z" fill="#c98f76"/><polygon points="-2.2,130.1 21.7,130.1 25.1,157.4 -2.2,157.4" fill="#222"/></g></g></svg>
<div class="b" style="left:1510.00px;top:492.00px;width:276.00px;height:154.00px;background:#1e1e1e;"></div>
<svg style="left:1569.0px;top:492.0px" width="155.0" height="154.0" viewBox="0 0 155.0 154.0"><defs><filter id="bl2061" x="-10%" y="-10%" width="120%" height="120%"><feGaussianBlur stdDeviation="2"/></filter><clipPath id="cp2061"><rect x="0" y="0" width="155.0" height="154.0"/></clipPath></defs><g clip-path="url(#cp2061)"><g filter="url(#bl2061)"><rect x="-5" y="-5" width="165" height="165" fill="#b4b4a4"/><polygon points="103.3,-4.0 156.8,-4.0 156.8,92.7 122.3,77.2" fill="#9a9a8a"/><polygon points="42.8,-4.0 103.3,-4.0 94.6,47.8 63.6,53.0 34.2,39.2" fill="#c6c6b6"/><polygon points="-2.1,-4.0 49.7,-4.0 48.0,27.1 39.4,40.9 16.9,39.2 -2.1,30.5" fill="#d6d8c8"/><polygon points="41.1,63.4 63.6,68.6 80.8,77.2 89.5,92.7 87.7,123.8 42.8,123.8" fill="#f6f8f8"/><polygon points="77.4,92.7 87.7,85.8 101.6,99.6 101.6,122.1 80.8,122.1" fill="#2e3040"/><path d="M -2.1,25.4 C 6.5,27.1 13.5,37.5 15.2,53.0 L -2.1,54.7 Z" fill="#4a90c8"/><path d="M 7.4,29.7 C 13.5,32.3 17.8,39.2 19.5,47.8 L 15.2,48.7 C 13.5,40.9 10.9,34.9 6.5,32.3 Z" fill="#c04848"/><path d="M 16.9,42.6 C 37.6,46.1 60.1,56.5 82.6,80.6" stroke="#1c2232" stroke-width="4.5" fill="none"/><path d="M 127.5,92.7 C 137.8,87.6 151.6,89.3 156.8,94.5 L 156.8,116.9 L 127.5,116.9 Z" fill="#2a2c38"/><path d="M 84.3,77.2 C 94.6,70.3 122.3,72.0 127.5,85.8 C 129.2,99.6 122.3,110.0 108.5,110.0 C 94.6,110.0 86.0,99.6 84.3,77.2 Z" fill="#a27262"/><path d="M 77.4,77.2 C 77.4,65.1 94.6,58.2 111.9,61.6 C 127.5,65.1 134.4,77.2 130.9,89.3 L 122.3,77.2 C 108.5,72.0 94.6,73.7 84.3,82.4 Z" fill="#2a2238"/><polygon points="94.6,99.6 127.5,96.2 129.2,116.9 98.1,120.4" fill="#8e6454"/><polygon points="56.6,123.8 80.8,116.9 101.6,120.4 129.2,115.2 156.8,115.2 156.8,154.9 54.9,154.9" fill="#c8623a"/><polygon points="94.6,118.6 129.2,115.2 130.9,125.6 101.6,127.3" fill="#222430"/><polygon points="81.7,122.1 94.6,120.4 99.0,154.9 85.1,154.9" fill="#84aacb"/><path d="M -2.1,58.2 C 8.3,49.5 34.2,49.5 48.0,68.6 C 53.2,82.4 49.7,99.6 41.1,103.1 L -2.1,106.6 Z" fill="#3c2a2a"/><path d="M 4.8,65.1 C 16.9,59.9 30.7,61.6 41.1,70.3 M 4.8,77.2 C 18.6,72.0 32.5,73.7 42.8,82.4" stroke="#5a4444" stroke-width="1.5" fill="none"/><polygon points="-2.1,99.6 42.8,96.2 49.7,120.4 60.1,154.9 -2.1,154.9" fill="#151111"/><polygon points="49.7,123.8 59.2,122.1 63.6,148.0 54.9,149.7" fill="#2a2a2a"/></g></g></svg>
<svg style="left:1484px;top:339px" width="17" height="17"><path d="M6 1 H11 V6 H16 V11 H11 V16 H6 V11 H1 V6 H6Z" fill="#fff" stroke="#000" stroke-width="1.5"/></svg>
<div class="t" style="top:899.24px;font-size:19.80px;line-height:19.80px;color:rgba(150,150,150,0.55);left:1556.00px;transform:scaleX(0.9977);transform-origin:0 0;">Activar Windows</div>
<div class="t" style="top:924.77px;font-size:14.80px;line-height:14.80px;color:#b0b0b0;left:1556.00px;transform:scaleX(1.0008);transform-origin:0 0;">Ve a Configuración para activar Windows.</div>
</body></html>
